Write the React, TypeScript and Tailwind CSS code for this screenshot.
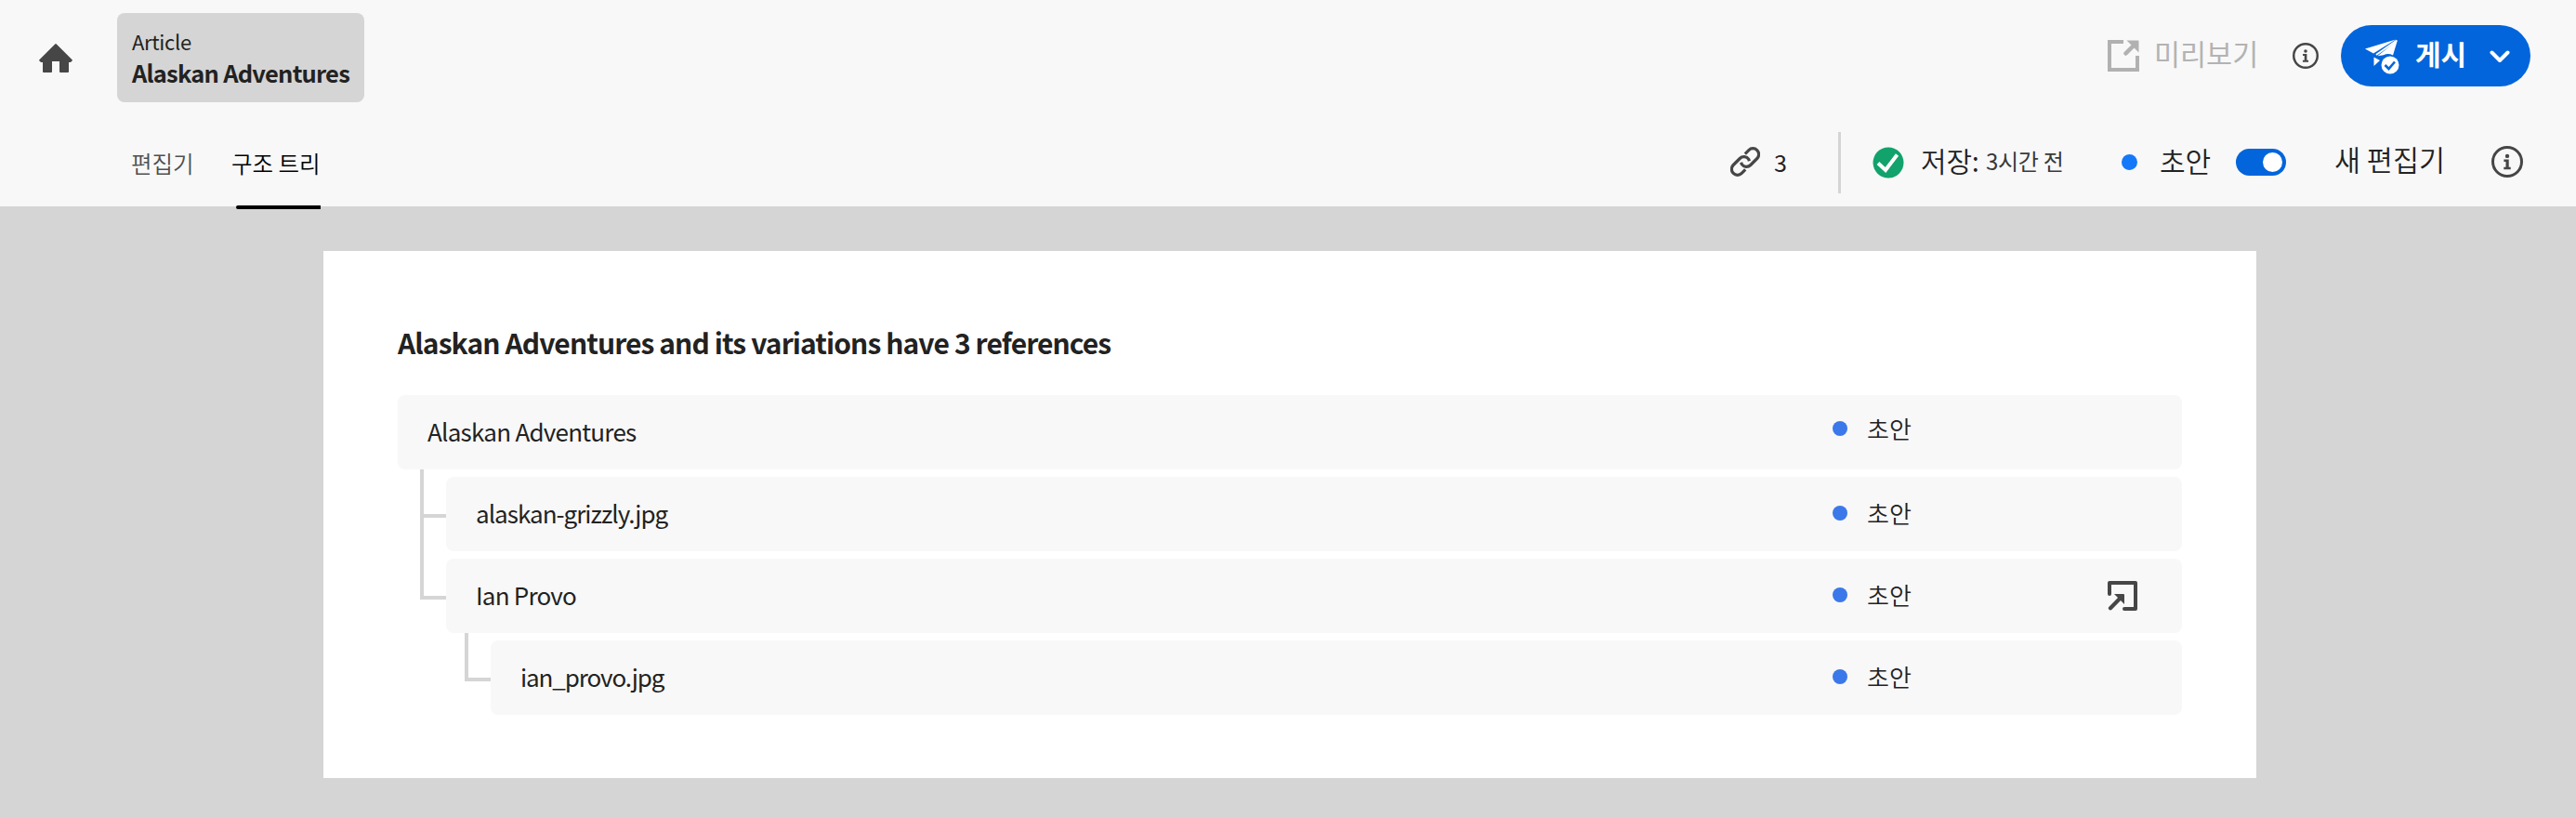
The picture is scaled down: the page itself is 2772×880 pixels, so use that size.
import React from "react";

const Info = ({ className }: { className: string }) => (
  <svg viewBox="0 0 34 34" className={className}>
    <circle cx="17" cy="17" r="15.5" fill="none" stroke="#464646" strokeWidth="3" />
    <circle cx="17" cy="10.9" r="2.2" fill="#464646" />
    <path d="M13.4 14.6h5.3v8.2h2v2.4h-7.4v-2.4h2.2v-5.8h-2.1z" fill="#464646" />
  </svg>
);

const HomeIcon = () => (
  <svg viewBox="0 0 36 31" className="ml-[42px] mt-[47px] h-[31px] w-[36px] shrink-0">
    <path
      d="M17.2.4a1.2 1.2 0 0 1 1.6 0L35.6 17.2a.9.9 0 0 1 0 1.2l-1.4 1.4a1 1 0 0 1-.8.3H32V30a1 1 0 0 1-1 1h-8a1 1 0 0 1-1-1V19h-8v11a1 1 0 0 1-1 1H5a1 1 0 0 1-1-1V20.1H2.6a1 1 0 0 1-.8-.3L.4 18.4a.9.9 0 0 1 0-1.2z"
      fill="#464646"
    />
  </svg>
);

const PreviewIcon = () => (
  <svg viewBox="0 0 34 34" className="mt-[43px] h-[34px] w-[34px] shrink-0">
    <path d="M17 2H2v30h30V17" fill="none" stroke="#b1b1b1" strokeWidth="4" />
    <path d="M20.5.5H33a.5.5 0 0 1 .5.5v12.5z" fill="#b1b1b1" />
    <path d="M19.500 14.500l8.500-8.500" stroke="#b1b1b1" strokeWidth="4.500" strokeLinecap="round" />
  </svg>
);

const PublishIcon = () => (
  <svg viewBox="0 0 37 38" className="ml-[26px] mt-[15px] h-[38px] w-[37px] shrink-0">
    <path d="M0 10.5 33 .5 9 15.5z" fill="#fff" />
    <path d="M35 1 30 17.5a11 11 0 0 0-10-.3l-6.5 1z" fill="#fff" />
    <path d="M34 1.5 12 17" fill="none" stroke="#fff" strokeWidth="2" />
    <path d="M9.5 19.5l6.5 3.5-6.5 6z" fill="#fff" />
    <circle cx="27" cy="28" r="9.5" fill="#fff" />
    <path d="m21.5 28 4 4 6.5-7.5" fill="none" stroke="#0265dc" strokeWidth="2.6" />
  </svg>
);

const LinkIcon = () => (
  <svg viewBox="0 0 32 32" className="mt-[38px] h-[32px] w-[32px] shrink-0">
    <g fill="none" stroke="#464646" strokeWidth="3.2">
      <path d="M15.8 7.6l4-4a6.3 6.3 0 0 1 9 8.9l-7 7a6.3 6.3 0 0 1-9.6-.9l-.6-1.800" />
      <path d="M16.2 24.4l-4 4a6.3 6.3 0 0 1-9-8.9l7-7a6.3 6.3 0 0 1 9.600.9l.6 1.800" />
    </g>
  </svg>
);

const SavedIcon = () => (
  <svg viewBox="0 0 34 34" className="ml-[34px] mt-[38px] h-[34px] w-[34px] shrink-0">
    <circle cx="17" cy="17" r="16.5" fill="#12a26c" />
    <path d="m6 17.5 8 7.5L26.5 8.5" fill="none" stroke="#fff" strokeWidth="4" />
  </svg>
);

const OpenIcon = () => (
  <svg viewBox="0 0 32 32" className="h-[32px] w-[32px] shrink-0">
    <path d="M2 14V2h28v28H18" fill="none" stroke="#464646" strokeWidth="4" strokeLinecap="round" strokeLinejoin="round" />
    <path d="M7 14h10a1 1 0 0 1 1 1v10l-4-4-9.5 9.8a2 2 0 0 1-3-3L11 18z" fill="#464646" />
  </svg>
);

type Item = { name: string; level: number; tracking: string; status: string; branch: string; open?: boolean };

const items: Item[] = [
  { name: "Alaskan Adventures", level: 0, tracking: "tracking-[-0.75px]", status: "mt-[-8px]", branch: "" },
  { name: "alaskan-grizzly.jpg", level: 1, tracking: "tracking-[-0.98px]", status: "mt-[-2px]", branch: "h-[52px]" },
  { name: "Ian Provo", level: 1, tracking: "tracking-[-0.8px]", status: "mt-[-2px]", branch: "h-[140px]", open: true },
  { name: "ian_provo.jpg", level: 2, tracking: "tracking-[-1.1px]", status: "mt-[-2px]", branch: "h-[52px]" },
];

const indents = ["", "ml-[52px]", "ml-[100px]"];

const Row = ({ item }: { item: Item }) => (
  <div className={`relative flex h-[80px] items-center rounded-lg bg-[#f8f8f8] pl-[32px] ${indents[item.level]}`}>
    {item.level > 0 && (
      <span className={`absolute bottom-[36px] left-[-28px] w-[28px] border-b-4 border-l-4 border-[#d5d5d5] ${item.branch}`} />
    )}
    <span className={`-mt-[2px] text-[26px] leading-[36px] ${item.tracking}`}>{item.name}</span>
    <div className={`ml-auto flex w-[376px] items-center ${item.status}`}>
      <span className="h-[16px] w-[16px] rounded-full bg-[#3b78ea]" />
      <span className="-mt-[1px] ml-[21px] text-[26px] font-[350] leading-[36px]">초안</span>
      {item.open && (
        <span className="ml-auto mr-[48px] mt-[2px]">
          <OpenIcon />
        </span>
      )}
    </div>
  </div>
);

export default function App() {
  return (
    <div className="h-[880px] w-[2772px] overflow-hidden bg-[#d5d5d5] font-['Noto_Sans_CJK_KR',sans-serif] text-[#222222]">
      <header className="h-[222px] bg-[#f8f8f8]">
        <div className="flex h-[120px] items-start whitespace-nowrap">
          <HomeIcon />
          <div className="ml-[48px] mt-[14px] h-[96px] w-[266px] rounded-lg bg-[#d5d5d5] pl-[16px] pt-[14px]">
            <div className="text-[22px] leading-[32px] tracking-[-0.3px]">Article</div>
            <div className="text-[25.5px] font-bold leading-[35px] tracking-[-0.78px]">Alaskan Adventures</div>
          </div>
          <div className="ml-auto flex items-start pr-[49px]">
            <PreviewIcon />
            <span className="ml-[16px] mt-[37px] w-[115px] text-[30.5px] leading-[40px] text-[#b3b3b3]">미리보기</span>
            <Info className="ml-[34px] mt-[46px] h-[28px] w-[28px]" />
            <button className="ml-[24px] mt-[27px] flex h-[66px] w-[204px] items-start rounded-full bg-[#0265dc] text-white">
              <PublishIcon />
              <span className="ml-[17px] mt-[10px] w-[58px] text-left text-[30px] font-bold leading-[40px]">게시</span>
              <svg viewBox="0 0 22 14" className="ml-[22px] mt-[27px] h-[14px] w-[22px]">
                <path d="m2.5 2.5 8.5 8.5 8.5-8.5" fill="none" stroke="#fff" strokeWidth="4" strokeLinecap="round" strokeLinejoin="round" />
              </svg>
            </button>
          </div>
        </div>
        <div className="flex h-[102px] items-start whitespace-nowrap pl-[141px] pr-[57px]">
          <nav className="flex items-start text-[24.5px] font-[350] leading-[36px]">
            <span className="mt-[38px] w-[72px] text-[#505050]">편집기</span>
            <span className="relative ml-[36px] mt-[38px] w-[96px] text-black">
              구조 트리
              <span className="absolute left-[5px] top-[63px] h-[4px] w-[91px] rounded-l-sm bg-black" />
            </span>
          </nav>
          <div className="ml-auto flex items-start">
            <LinkIcon />
            <span className="ml-[15px] mt-[36px] w-[69px] text-[25px] leading-[36px]">3</span>
            <span className="mt-[22px] h-[66px] w-[3px] bg-[#d5d5d5]" />
            <SavedIcon />
            <span className="ml-[18px] mt-[32px] w-[70px] text-[30px] font-[350] leading-[40px] tracking-[-0.2px]">저장:</span>
            <span className="mt-[35px] w-[146px] text-[24px] leading-[36px] tracking-[-0.3px] text-[#3a3a3a]">3시간 전</span>
            <span className="mt-[46px] h-[17px] w-[17px] rounded-full bg-[#1479f8]" />
            <span className="ml-[24px] mt-[32px] w-[82px] text-[30px] font-[350] leading-[40px]">초안</span>
            <span className="mt-[40px] flex h-[29px] w-[54px] items-center justify-end rounded-full bg-[#0265dc] pr-[4px]">
              <span className="h-[21px] w-[21px] rounded-full bg-white" />
            </span>
            <span className="ml-[52px] mt-[31px] w-[169px] text-[30.5px] font-[350] leading-[40px]">새 편집기</span>
            <Info className="mt-[37px] h-[34px] w-[34px]" />
          </div>
        </div>
      </header>
      <main className="ml-[348px] mt-[48px] h-[567px] w-[2080px] bg-white px-[80px] pt-[74px]">
        <h1 className="h-[81px] text-[30px] font-bold leading-[48px] tracking-[-0.91px]">
          Alaskan Adventures and its variations have 3 references
        </h1>
        <div className="flex flex-col gap-[8px]">
          {items.map((item) => (
            <Row key={item.name} item={item} />
          ))}
        </div>
      </main>
    </div>
  );
}
